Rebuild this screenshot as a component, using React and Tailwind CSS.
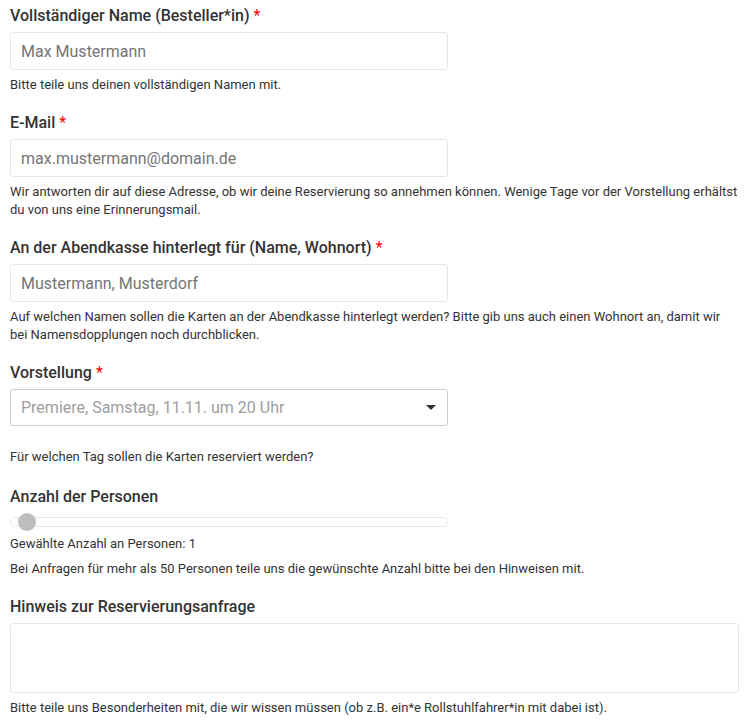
import React from 'react';

const Label = ({ children, required }) => (
  <label className="block h-6 leading-6 text-base font-medium text-[#333]">
    {children}
    {required && <span className="ml-1 font-normal text-[#f00]">*</span>}
  </label>
);

const Help = ({ children, className = '' }) => (
  <p className={`text-[13px] leading-[18px] text-[#333] ${className}`}>{children}</p>
);

const TextInput = ({ placeholder }) => (
  <input
    type="text"
    placeholder={placeholder}
    className="mt-1 block h-[38px] w-[438px] rounded-[3px] border border-[#e6e6e6] bg-white px-[10px] text-base text-[#333] outline-none placeholder:text-[#757575]"
  />
);

export default function App() {
  return (
    <div
      className="bg-white pl-[10px] pr-[6px] pt-1"
      style={{ fontFamily: 'Roboto, "Liberation Sans", sans-serif' }}
    >
      {/* Name */}
      <div className="mb-[17px]">
        <Label required>Vollständiger Name (Besteller*in)</Label>
        <TextInput placeholder="Max Mustermann" />
        <Help className="mt-[6px]">Bitte teile uns deinen vollständigen Namen mit.</Help>
      </div>

      {/* E-Mail */}
      <div className="mb-[17px]">
        <Label required>E-Mail</Label>
        <TextInput placeholder="max.mustermann@domain.de" />
        <Help className="mt-[6px]">
          Wir antworten dir auf diese Adresse, ob wir deine Reservierung so annehmen können. Wenige Tage vor der Vorstellung erhältst du von uns eine Erinnerungsmail.
        </Help>
      </div>

      {/* Abendkasse */}
      <div className="mb-[17px]">
        <Label required>An der Abendkasse hinterlegt für (Name, Wohnort)</Label>
        <TextInput placeholder="Mustermann, Musterdorf" />
        <Help className="mt-[6px]">
          Auf welchen Namen sollen die Karten an der Abendkasse hinterlegt werden? Bitte gib uns auch einen Wohnort an, damit wir bei Namensdopplungen noch durchblicken.
        </Help>
      </div>

      {/* Vorstellung */}
      <div className="mb-[19px]">
        <Label required>Vorstellung</Label>
        <div className="mt-1 flex h-[37px] w-[438px] items-center justify-between rounded-[3px] border border-[#cccccc] bg-white pl-[10px] pr-[10px]">
          <span className="text-base text-[#9e9e9e]">Premiere, Samstag, 11.11. um 20 Uhr</span>
          <svg width="10" height="5" viewBox="0 0 10 5" className="mr-[1px]">
            <path d="M0 0h10L5 5z" fill="#333" />
          </svg>
        </div>
        <Help className="mt-[22px]">Für welchen Tag sollen die Karten reserviert werden?</Help>
      </div>

      {/* Anzahl */}
      <div className="mb-[17px]">
        <Label>Anzahl der Personen</Label>
        <div className="relative flex h-[26px] w-[438px] items-center">
          <div className="h-[10px] w-full rounded-full border border-[#e8e8e8] bg-white" />
          <div className="absolute left-[8px] top-[4px] h-[18px] w-[18px] rounded-full bg-[#bdbdbd]" />
        </div>
        <Help>Gewählte Anzahl an Personen: 1</Help>
        <Help className="mt-[7px]">Bei Anfragen für mehr als 50 Personen teile uns die gewünschte Anzahl bitte bei den Hinweisen mit.</Help>
      </div>

      {/* Hinweis */}
      <div className="pb-2">
        <Label>Hinweis zur Reservierungsanfrage</Label>
        <textarea className="mt-1 block h-[70px] w-full resize-none rounded-[3px] border border-[#e6e6e6] bg-white px-[10px] py-2 text-base outline-none" />
        <Help className="mt-[6px]">
          Bitte teile uns Besonderheiten mit, die wir wissen müssen (ob z.B. ein*e Rollstuhlfahrer*in mit dabei ist).
        </Help>
      </div>
    </div>
  );
}
